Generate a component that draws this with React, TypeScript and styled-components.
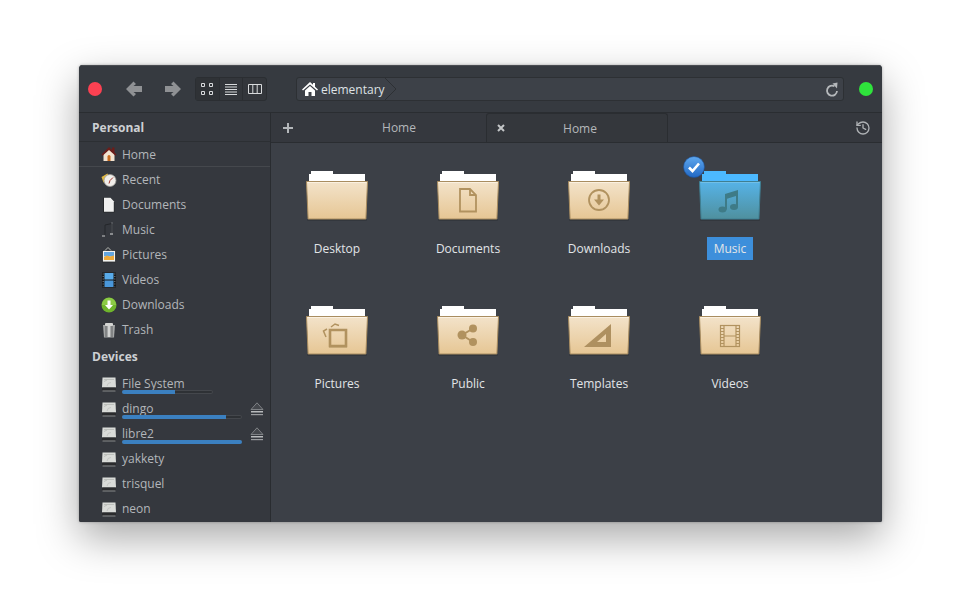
import React from 'react';
import styled, { createGlobalStyle } from 'styled-components';
import { History } from 'lucide-react';

const Global = createGlobalStyle`
  html, body { margin: 0; padding: 0; background: #fff; }
  body { font-family: "Open Sans", "DejaVu Sans", sans-serif; font-size: 12px; }
`;

const Page = styled.div`
  width: 961px; height: 615px; padding: 65px 0 0 79px; box-sizing: border-box; overflow: hidden; background: #fff;
`;
const Window = styled.div`
  width: 803px; height: 457px; display: flex; flex-direction: column; overflow: hidden;
  border-radius: 4px 4px 2px 2px; background: #3c4047;
  box-shadow: 0 16px 42px rgba(0,0,0,.34), 0 0 3px rgba(0,0,0,.3);
`;
const HeaderBar = styled.header`
  height: 48px; flex: none; box-sizing: border-box; display: flex; align-items: center;
  padding: 0 9px; background: #363a40; border-top: 1px solid #4a4d52; border-bottom: 1px solid #2a2d31;
`;
const Dot = styled.span<{ $c: string; $gap?: number }>`
  width: 14px; height: 14px; flex: none; border-radius: 50%; background: ${p => p.$c}; margin-left: ${p => p.$gap ?? 0}px;
`;
const NavButton = styled.span<{ $gap: number }>`
  display: flex; flex: none; width: 20px; height: 20px; margin-left: ${p => p.$gap}px; align-items: center; justify-content: center;
`;
const ViewSwitch = styled.div`
  display: flex; width: 72px; height: 24px; margin-left: 12px; flex: none; border: 1px solid #2b2e32; border-radius: 3px; background: #33363b; box-sizing: border-box;
`;
const ViewBtn = styled.span<{ $active?: boolean }>`
  display: flex; flex: 1; align-items: center; justify-content: center;
  background: ${p => p.$active ? '#2f3236' : 'transparent'};
  & + & { border-left: 1px solid #2b2e32; }
`;
const PathBar = styled.div`
  flex: none; width: 548px; height: 24px; margin-left: 29px; box-sizing: border-box; display: flex; align-items: center;
  border: 1px solid #2d3034; border-radius: 3px; background: #3d4148; color: #dfe2e5; padding-left: 5px;
`;
const PathText = styled.span` margin-left: 3px; font-size: 12px; `;
const Crumb = styled.svg` flex: none; `;
const Reload = styled.svg` margin-left: auto; margin-right: 4px; display: block; flex: none; `;
const Body = styled.div` flex: 1; display: flex; min-height: 0; `;
const Sidebar = styled.aside`
  width: 192px; flex: none; background: #35383e; border-right: 1px solid #292c30; box-sizing: border-box;
`;
const SectionHead = styled.div<{ $line?: boolean }>`
  height: 29px; padding-left: 13px; display: flex; align-items: center; box-sizing: border-box; font-weight: 700; font-size: 12px; color: #cdd0d3;
  border-bottom: ${p => p.$line ? '1px solid #2c2f33' : 'none'};
`;
const Row = styled.div<{ $line?: boolean }>`
  position: relative; height: 25px; box-sizing: border-box; padding-left: 22px; display: flex; align-items: center; gap: 5px;
  color: #b3b6ba; font-size: 12px;
  border-bottom: ${p => p.$line ? '1px solid #45484d' : 'none'};
`;
const Usage = styled.span<{ $w: number; $f: number }>`
  position: absolute; left: 43px; top: 19px; height: 4px; width: ${p => p.$w}px; border-radius: 2px;
  background: #2e3135; box-shadow: inset 0 0 0 1px #44474c; overflow: hidden;
  &::after { content: ''; display: block; height: 100%; width: ${p => p.$f}px; background: #3b80c0; }
`;
const Eject = styled.svg` position: absolute; left: 171px; top: 6px; `;
const Main = styled.main` flex: 1; min-width: 0; display: flex; flex-direction: column; `;
const TabBar = styled.div`
  height: 30px; flex: none; box-sizing: border-box; display: flex; background: #35383e; border-bottom: 1px solid #2a2d31; color: #b4b7bb; font-size: 12px;
`;
const NewTab = styled.span` width: 40px; flex: none; display: flex; align-items: center; padding-left: 11px; box-sizing: border-box; `;
const Tab = styled.div<{ $active?: boolean }>`
  position: relative; display: flex; align-items: center; justify-content: center; flex: none; box-sizing: border-box;
  width: ${p => p.$active ? 182 : 175}px;
  ${p => p.$active ? 'border: 1px solid #2a2d31; border-bottom: none; border-radius: 3px 3px 0 0; background: #34373c; padding-left: 6px;' : 'padding-left: 1px;'}
`;
const TabClose = styled.svg` position: absolute; left: 9px; top: 9px; `;
const HistoryBtn = styled.span` margin-left: auto; margin-right: 11px; display: flex; align-items: center; color: #aeb1b4; `;
const Grid = styled.div` flex: 1; display: grid; grid-template-columns: repeat(4, 131px); grid-auto-rows: 135px; align-content: start; background: #3c4047; `;
const Cell = styled.div` display: flex; flex-direction: column; align-items: center; padding-top: 26px; box-sizing: border-box; position: relative; `;
const Label = styled.span<{ $sel?: boolean }>`
  margin-top: 16px; height: 23px; line-height: 23px; padding: 0 7px; color: #e2e5e8; font-size: 12px; position: relative; left: .5px;
  background: ${p => p.$sel ? '#3d8fdb' : 'transparent'};
`;
const Check = styled.svg` position: absolute; left: 19px; top: 13px; `;

const Folder = ({ id, blue, children }: { id: string; blue?: boolean; children?: React.ReactNode }) => (
  <svg width="64" height="52" viewBox="0 0 64 52">
    <defs>
      <linearGradient id={id} x1="0" y1="0" x2="0" y2="1">
        <stop offset="0" stopColor={blue ? '#56b3e8' : '#f3e3ca'} />
        <stop offset="1" stopColor={blue ? '#4f909e' : '#e6c694'} />
      </linearGradient>
    </defs>
    <path d="M4 14V5h2V2h22v3h32v9z" fill={blue ? '#4cb9ff' : '#ffffff'} />
    <path d="M3 50.5h58l1 1H2z" fill="#000" opacity=".28" />
    <path d="M1.5 12.5h61l-1.6 37.5H3.1z" fill={`url(#${id})`} stroke={blue ? '#3f7f92' : '#a98d60'} strokeWidth="1" />
    <path d="M2.500 13.500h59" stroke={blue ? '#71c0e8' : '#fbf1e1'} strokeWidth="1" />
    {children}
  </svg>
);

const G = '#b1925f';

const glyphDoc = <path d="M24 20h10l6 6v16.500H24z M34 20v6h6" fill="none" stroke={G} strokeWidth="1.800" />;
const glyphDown = (
  <g>
    <circle cx="32" cy="31" r="10" fill="none" stroke={G} strokeWidth="1.800" />
    <path d="M30.500 25.500h3v5h3.500L32 36.500l-5-6h3.500z" fill={G} />
  </g>
);
const glyphMusic = (
  <g fill="#3e7b87">
    <ellipse cx="24.500" cy="40.500" rx="4" ry="3" />
    <ellipse cx="36" cy="38" rx="4" ry="3" />
    <path d="M27 40.500V25l13-4v17h-2V27l-9 2.700v10.800z" />
  </g>
);
const glyphPictures = (
  <g fill="none" stroke={G}>
    <path d="M25 26h16v16H25z" strokeWidth="2.600" />
    <path d="M24 42.500h18" strokeWidth="2" />
    <path d="M26 23l4-3 4 1.500" strokeWidth="1.500" />
    <path d="M22 25l-3.500 2 2.500 6" strokeWidth="1.500" />
  </g>
);
const glyphShare = (
  <g fill={G}>
    <circle cx="37" cy="24.500" r="4" />
    <circle cx="26" cy="31" r="4.500" />
    <circle cx="37" cy="38" r="4" />
    <path d="M26 31L37 24.500M26 31L37 38" stroke={G} strokeWidth="2" />
  </g>
);
const glyphTemplate = <path fillRule="evenodd" d="M17 43L44 20v23zM30 38h9v-8z" fill="#ae9060" />;
const glyphFilm = (
  <g fill="none" stroke={G}>
    <rect x="22.500" y="21.500" width="19" height="21" strokeWidth="1.200" />
    <path d="M26 21.500v21M38 21.500v21M26 32h12" strokeWidth="1.200" />
    <path d="M22.500 24.500h3.500M22.500 27.500h3.500M22.500 30.500h3.500M22.500 33.500h3.500M22.500 36.500h3.500M22.500 39.500h3.500M38 24.500h3.500M38 27.500h3.500M38 30.500h3.500M38 33.500h3.500M38 36.500h3.500M38 39.500h3.500" strokeWidth="1.100" />
  </g>
);

const IconSvg = styled.svg` flex: none; display: block; `;
const Ic = ({ children }: { children: React.ReactNode }) => (
  <IconSvg width="16" height="16" viewBox="0 0 16 16">{children}</IconSvg>
);

const HomeIc = () => (
  <Ic>
    <path d="M2.500 7.500V15h11V7.500L8 3z" fill="#f2e3d0" />
    <path d="M.5 8.500L8 1l3 3V1.500h2.500v5l2 2-1 1.200L8 4 1.500 9.700z" fill="#6b1d1a" />
    <path d="M6.500 15v-4.500a1.500 1.500 0 013 0V15z" fill="#c96b1f" />
  </Ic>
);
const RecentIc = () => (
  <Ic>
    <path d="M.5 5l6-3.500 3 7-7 2z" fill="#e2b93f" />
    <circle cx="9" cy="8.500" r="6" fill="#f1eeea" stroke="#9b9a96" strokeWidth=".8" />
    <path d="M9 8.500l3-3M9 8.500l-1 3" stroke="#a0332a" strokeWidth="1" fill="none" />
  </Ic>
);
const DocIc = () => (
  <Ic>
    <path d="M2 .5h7.500l4 4v11H2z" fill="#26282b" />
    <path d="M3 .8h6.500l3.300 3.500v10.500H3z" fill="#f0f0f0" />
  </Ic>
);
const MusicIc = () => (
  <Ic>
    <path d="M4 13V3l7-1.500" stroke="#24262a" strokeWidth="1" fill="none" />
    <path d="M11 2v9" stroke="#4a4d51" strokeWidth="1" />
    <rect x="1" y="13" width="3" height="2" fill="#7d7f82" />
    <rect x="9" y="11" width="3" height="2" fill="#8a8c8f" />
    <path d="M10 1h2" stroke="#6d6f72" />
  </Ic>
);
const PicturesIc = () => (
  <Ic>
    <rect x="1.500" y="3.500" width="13" height="11.500" fill="#f3f3f0" stroke="#2a2c2f" strokeWidth=".8" />
    <rect x="3" y="5" width="10" height="4.500" fill="#63a6e0" />
    <path d="M3 13v-3l3-1.500 3 1 4-1V13z" fill="#eeaa3a" />
    <path d="M4 3.500l3-3 3 3" fill="none" stroke="#b7b8b3" strokeWidth="1" />
  </Ic>
);
const VideosIc = () => (
  <Ic>
    <rect x="1" y=".5" width="14" height="15" fill="#17181a" />
    <rect x="3.500" y="1" width="9" height="6.500" fill="#59abea" />
    <rect x="3.500" y="8.500" width="9" height="6.500" fill="#4a97da" />
    <path d="M2.200 1.500v13" stroke="#8a8a8a" strokeWidth="1" strokeDasharray="1 1.500" />
    <path d="M13.800 1.500v13" stroke="#8a8a8a" strokeWidth="1" strokeDasharray="1 1.500" />
  </Ic>
);
const DownIc = () => (
  <Ic>
    <circle cx="8" cy="8" r="7.500" fill="#6fb52c" />
    <path d="M.8 8a7.200 7.200 0 0114.400 0" fill="#8ccb46" />
    <path d="M6.500 3.500h3V8H12l-4 4.500L4 8h2.500z" fill="#fff" />
  </Ic>
);
const TrashIc = () => (
  <Ic>
    <path d="M2 3h12L13 15.500H3z" fill="#a4a6a6" />
    <path d="M5 4v11M11 4v11" stroke="#5f6162" strokeWidth="1" />
    <rect x="4" y="1" width="8" height="3" rx="1" fill="#d4d5d3" />
    <path d="M8 4v11" stroke="#e2e2e0" strokeWidth="1.500" />
  </Ic>
);
const DriveIc = () => (
  <Ic>
    <path d="M1.500 1.500h13L15 11.500H1z" fill="#d9dbd8" />
    <path d="M3 3.500h10M3 5.500l3-1.500" stroke="#b5b7b4" strokeWidth=".8" />
    <path d="M6 10a4 4 0 014-3.500" stroke="#bdbfbc" strokeWidth=".8" fill="none" />
    <rect x="1" y="11.500" width="14" height="3" rx=".5" fill="#2a2b2d" />
    <rect x="1.500" y="14.500" width="13" height="1" fill="#88898a" />
  </Ic>
);

const EjectIcon = () => (
  <Eject width="14" height="14" viewBox="0 0 14 14">
    <path d="M7 .8L13 7.500H1z" fill="#44474c" stroke="#8f9295" strokeWidth=".8" />
    <rect x="1" y="9" width="12" height="1.500" fill="#b9bbbd" />
    <rect x="1" y="12" width="12" height="1.200" fill="#9a9c9f" />
  </Eject>
);

const personal = [
  ['Recent', RecentIc], ['Documents', DocIc], ['Music', MusicIc], ['Pictures', PicturesIc],
  ['Videos', VideosIc], ['Downloads', DownIc], ['Trash', TrashIc],
] as const;

const devices: { name: string; w?: number; f?: number; eject?: boolean }[] = [
  { name: 'File System', w: 91, f: 53 },
  { name: 'dingo', w: 120, f: 104, eject: true },
  { name: 'libre2', w: 120, f: 120, eject: true },
  { name: 'yakkety' }, { name: 'trisquel' }, { name: 'neon' },
];

const folders: { name: string; glyph?: React.ReactNode; sel?: boolean }[] = [
  { name: 'Desktop' }, { name: 'Documents', glyph: glyphDoc }, { name: 'Downloads', glyph: glyphDown },
  { name: 'Music', glyph: glyphMusic, sel: true }, { name: 'Pictures', glyph: glyphPictures },
  { name: 'Public', glyph: glyphShare }, { name: 'Templates', glyph: glyphTemplate }, { name: 'Videos', glyph: glyphFilm },
];

export default function App() {
  return (
    <Page>
      <Global />
      <Window>
        <HeaderBar>
          <Dot $c="#fc4152" />
          <NavButton $gap={22}>
            <svg width="18" height="16" viewBox="0 0 18 16"><path d="M8.500 .5L1 8l7.500 7.500 2.500-2.500L8.500 11H17V5H8.500L11 3z" fill="#8f9194" /></svg>
          </NavButton>
          <NavButton $gap={19}>
            <svg width="18" height="16" viewBox="0 0 18 16"><path d="M9.500 .5L17 8l-7.500 7.500L7 13l2.500-2H1V5h8.500L7 3z" fill="#8f9194" /></svg>
          </NavButton>
          <ViewSwitch>
            <ViewBtn $active>
              <svg width="14" height="14" viewBox="0 0 14 14"><path d="M1.500 1.500h3v3h-3zM9.500 1.500h3v3h-3zM1.500 9.500h3v3h-3zM9.500 9.500h3v3h-3z" fill="none" stroke="#d8dadc" /></svg>
            </ViewBtn>
            <ViewBtn>
              <svg width="14" height="13" viewBox="0 0 14 13"><path d="M1 1.500h12M1 4h12M1 6.500h12M1 9h12M1 11.500h12" stroke="#d8dadc" /></svg>
            </ViewBtn>
            <ViewBtn>
              <svg width="14" height="12" viewBox="0 0 14 12"><path d="M.5 1.500h13v9H.5zM4.800 1.500v9M9.200 1.500v9" fill="none" stroke="#d8dadc" /></svg>
            </ViewBtn>
          </ViewSwitch>
          <PathBar>
            <svg width="16" height="16" viewBox="0 0 16 16"><path d="M0 8.500L8 1l3 2.800V2h2v3.700l3 2.800-1 1L8 3.500 1 9.500zM3 9.500L8 5l5 4.500V15H9.500v-4h-3v4H3z" fill="#fff" /></svg>
            <PathText>elementary</PathText>
            <Crumb width="12" height="22" viewBox="0 0 12 22"><path d="M0 0l11 11L0 22" fill="none" stroke="#2d3034" /></Crumb>
            <Reload width="14" height="15" viewBox="0 0 14 15">
              <path d="M9.500 4.300a5 5 0 102.500 4.700" fill="none" stroke="#b5b8bb" strokeWidth="1.800" />
              <path d="M7.500 1.500l5-1-.5 6z" fill="#b5b8bb" />
            </Reload>
          </PathBar>
          <Dot $c="#2fe33c" $gap={15} />
        </HeaderBar>
        <Body>
          <Sidebar>
            <SectionHead $line>Personal</SectionHead>
            <Row $line><HomeIc />Home</Row>
            {personal.map(([n, I]) => <Row key={n}><I />{n}</Row>)}
            <SectionHead>Devices</SectionHead>
            {devices.map(d => (
              <Row key={d.name}>
                <DriveIc />{d.name}
                {d.w ? <Usage $w={d.w} $f={d.f!} /> : null}
                {d.eject ? <EjectIcon /> : null}
              </Row>
            ))}
          </Sidebar>
          <Main>
            <TabBar>
              <NewTab>
                <svg width="12" height="12" viewBox="0 0 12 12"><path d="M6 1v10M1 6h10" stroke="#b4b7ba" strokeWidth="2" /></svg>
              </NewTab>
              <Tab>Home</Tab>
              <Tab $active>
                <TabClose width="10" height="10" viewBox="0 0 10 10"><path d="M2 2l6 6M8 2l-6 6" stroke="#c4c6c8" strokeWidth="2" /></TabClose>
                Home
              </Tab>
              <HistoryBtn><History size={16} strokeWidth={2} /></HistoryBtn>
            </TabBar>
            <Grid>
              {folders.map((f, i) => (
                <Cell key={f.name}>
                  {f.sel ? (
                    <Check width="22" height="22" viewBox="0 0 22 22">
                      <defs>
                        <linearGradient id="chk" x1="0" y1="0" x2="0" y2="1">
                          <stop offset="0" stopColor="#5fa8ee" /><stop offset="1" stopColor="#2168c4" />
                        </linearGradient>
                      </defs>
                      <circle cx="11" cy="11" r="10.500" fill="url(#chk)" stroke="#1d4f96" strokeWidth=".6" />
                      <path d="M6 11.500l3.500 3.500L16 7.500" fill="none" stroke="#fff" strokeWidth="2.600" />
                    </Check>
                  ) : null}
                  <Folder id={`f${i}`} blue={f.sel}>{f.glyph}</Folder>
                  <Label $sel={f.sel}>{f.name}</Label>
                </Cell>
              ))}
            </Grid>
          </Main>
        </Body>
      </Window>
    </Page>
  );
}
